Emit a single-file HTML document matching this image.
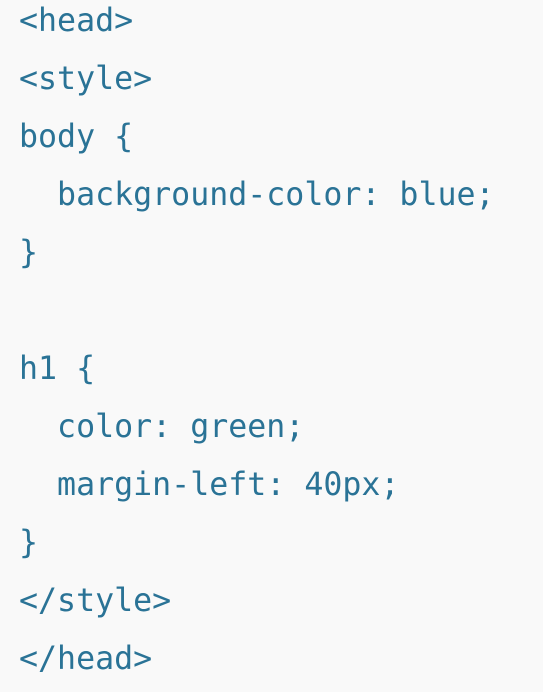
<!DOCTYPE html>
<html><head><style>
html,body{margin:0;padding:0;background:#f9f9f9;width:543px;height:692px;overflow:hidden}
pre{margin:0;position:absolute;left:19px;top:-8px;font-family:"DejaVu Sans Mono","Liberation Mono",monospace;font-size:31.6px;line-height:58px;color:#2a7396;}
</style></head><body>
<pre>&lt;head&gt;
&lt;style&gt;
body {
  background-color: blue;
}

h1 {
  color: green;
  margin-left: 40px;
}
&lt;/style&gt;
&lt;/head&gt;</pre>
</body></html>
